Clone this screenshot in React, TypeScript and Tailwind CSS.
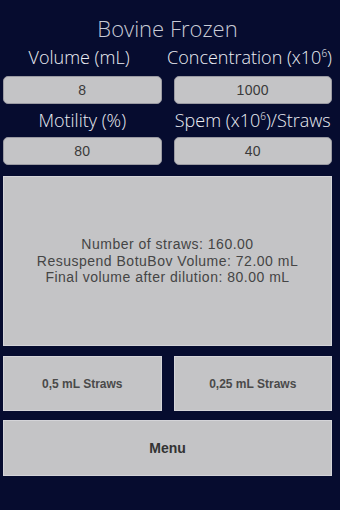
import React from "react";

const labelFont = { fontFamily: "'Open Sans', Lato, sans-serif" };

function Label({ children }: { children: React.ReactNode }) {
  return (
    <div className="flex-1 text-center text-[18px] leading-[20px] font-light text-[#eceef4] whitespace-nowrap" style={labelFont}>
      {children}
    </div>
  );
}

function Field({ value }: { value: string }) {
  return (
    <div className="flex-1 h-[28px] rounded-[5px] bg-[#c4c4c6] border border-[#9a9aa2] flex items-center justify-center text-[14px] tracking-[0.3px] text-[#3a3a3a] font-['Liberation_Sans',Arial,sans-serif]">
      {value}
    </div>
  );
}

export default function App() {
  return (
    <div className="w-[340px] h-[510px] bg-[#060c2f] pl-[3px] pr-[8px] pt-[15px] flex flex-col font-['Liberation_Sans',Arial,sans-serif]">
      <div className="text-center text-[22px] leading-[26px] font-light text-[#c9cbd6]" style={labelFont}>
        Bovine Frozen
      </div>
      <div className="flex gap-[12px] mt-[6px]">
        <Label>Volume (mL)</Label>
        <Label>
          Concentration (x10<sup className="text-[10px] relative -top-[7px]">6</sup>)
        </Label>
      </div>
      <div className="flex gap-[12px] mt-[9px]">
        <Field value="8" />
        <Field value="1000" />
      </div>
      <div className="flex gap-[12px] mt-[6px]">
        <Label>Motility (%)</Label>
        <Label>
          Spem (x10<sup className="text-[10px] relative -top-[7px]">6</sup>)/Straws
        </Label>
      </div>
      <div className="flex gap-[12px] mt-[7px]">
        <Field value="80" />
        <Field value="40" />
      </div>
      <div className="mt-[11px] h-[170px] bg-[#c4c4c6] border border-[#d4d4d8] flex flex-col items-center justify-center text-[14px] leading-[16.5px] tracking-[0.5px] text-[#454545] text-center">
        <div>Number of straws: 160.00</div>
        <div>Resuspend BotuBov Volume: 72.00 mL</div>
        <div>Final volume after dilution: 80.00 mL</div>
      </div>
      <div className="flex gap-[12px] mt-[10px]">
        <div className="flex-1 h-[55px] bg-[#c4c4c6] border border-[#d4d4d8] flex items-center justify-center text-[12px] font-semibold text-[#4a4a4a]">
          0,5 mL Straws
        </div>
        <div className="flex-1 h-[55px] bg-[#c4c4c6] border border-[#d4d4d8] flex items-center justify-center text-[12px] font-semibold text-[#4a4a4a]">
          0,25 mL Straws
        </div>
      </div>
      <div className="mt-[9px] h-[56px] bg-[#c4c4c6] border border-[#d4d4d8] flex items-center justify-center text-[14px] font-semibold text-[#333]">
        Menu
      </div>
    </div>
  );
}
